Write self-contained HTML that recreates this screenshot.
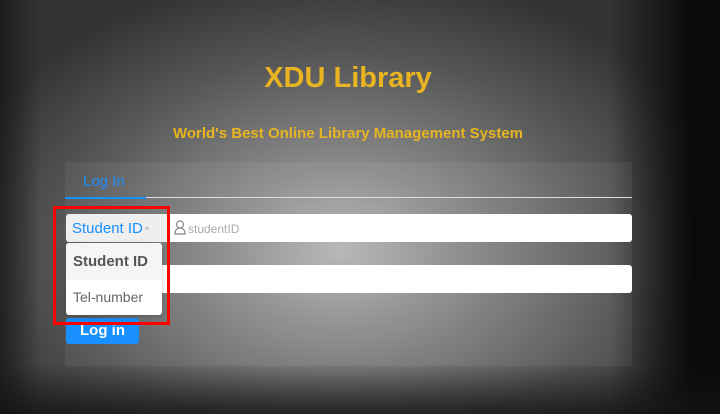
<!DOCTYPE html>
<html><head><style>
body{margin:0;width:720px;height:414px;overflow:hidden;font-family:"Liberation Sans",sans-serif;
background:radial-gradient(ellipse 400px 280px at 340px 250px,#b5b5b5 0%,#8a8a8a 30%,#555 70%,#333 100%);position:relative}
.vig{position:absolute;right:0;top:0;width:110px;height:414px;background:linear-gradient(90deg,rgba(0,0,0,0),#0a0a0a 75%)}
.lvig{position:absolute;left:0;top:0;width:40px;height:414px;background:linear-gradient(90deg,rgba(20,20,20,.7),rgba(0,0,0,0))}
.bot{position:absolute;left:0;bottom:0;width:720px;height:50px;background:linear-gradient(180deg,rgba(0,0,0,0),rgba(20,20,20,.8))}
.t{position:absolute;left:0;width:696px;text-align:center;color:#e8b421;font-weight:bold}
.panel{position:absolute;left:65px;top:162px;width:567px;height:204px;background:rgba(255,255,255,.05)}
.a{position:absolute}
</style></head><body>
<div class="vig"></div><div class="lvig"></div><div class="bot"></div>
<div class="t" style="top:62px;font-size:29px;">XDU Library</div>
<div class="t" style="top:125px;font-size:15px;">World's Best Online Library Management System</div>
<div class="panel"></div>
<div class="a" style="left:83px;top:173px;color:#1890ff;font-size:15px">Log In</div>
<div class="a" style="left:65px;top:197px;width:81px;height:2px;background:#1890ff"></div>
<div class="a" style="left:146px;top:197px;width:486px;height:1px;background:#ddd"></div>
<div class="a" style="left:66px;top:214px;width:101px;height:28px;background:#efefef;border-radius:3px 0 0 3px"></div>
<div class="a" style="left:72px;top:220px;color:#1890ff;font-size:15px">Student ID<span style="font-size:9px;color:#999;margin-left:2px">^</span></div>
<div class="a" style="left:167px;top:214px;width:465px;height:28px;background:#fff;border-radius:0 3px 3px 0"></div>
<svg class="a" style="left:174px;top:220px" width="12" height="15" viewBox="0 0 12 15"><circle cx="6" cy="4.5" r="3.5" fill="none" stroke="#888" stroke-width="1.2"/><path d="M1 14c0-4 2-6 5-6s5 2 5 6z" fill="none" stroke="#888" stroke-width="1.2"/></svg>
<div class="a" style="left:188px;top:222px;color:#aaa;font-size:12px">studentID</div>
<div class="a" style="left:66px;top:265px;width:566px;height:28px;background:#fff;border-radius:3px"></div>
<div class="a" style="left:66px;top:318px;width:73px;height:26px;background:#1890ff;border-radius:3px;color:#fff;font-weight:bold;font-size:15px;text-align:center;line-height:26px">Log in</div>
<div class="a" style="left:66px;top:243px;width:96px;height:72px;background:#fff;border-radius:3px;box-shadow:0 2px 6px rgba(0,0,0,.2);overflow:hidden">
<div style="height:37px;background:#f5f5f5;color:#555;font-size:15px;font-weight:bold;line-height:37px;padding-left:7px">Student ID</div>
<div style="height:35px;color:#666;font-size:14px;line-height:35px;padding-left:7px">Tel-number</div></div>
<div class="a" style="left:53px;top:206px;width:111px;height:113px;border:3px solid #f00"></div>
</body></html>
